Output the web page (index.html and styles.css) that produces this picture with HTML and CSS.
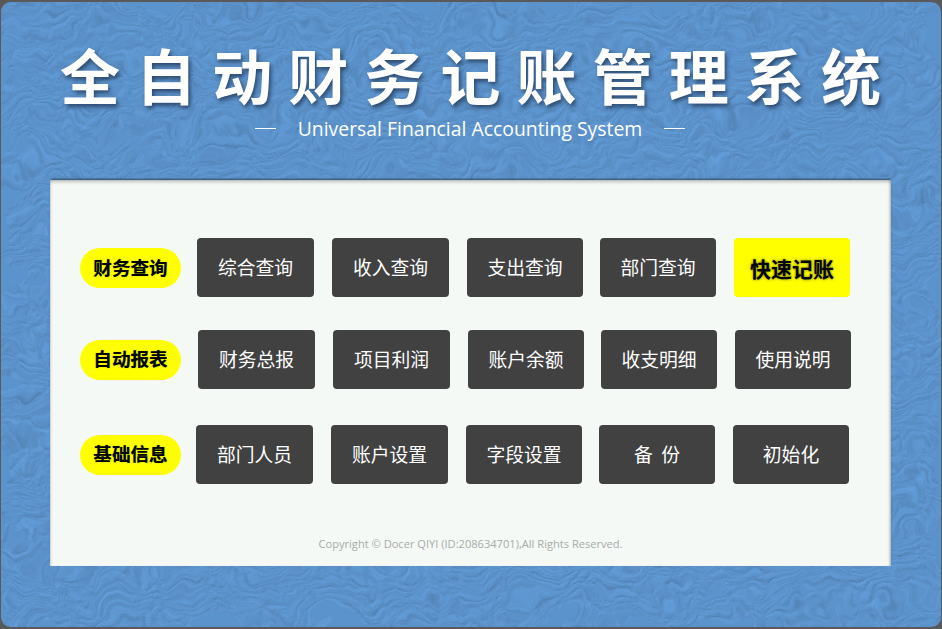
FILE: index.html
```html
<!DOCTYPE html>
<html lang="zh-CN">
<head>
<meta charset="utf-8">
<title>全自动财务记账管理系统</title>
<link rel="stylesheet" href="styles.css">
</head>
<body>
<div class="frame">
  <svg class="texture" width="100%" height="100%" aria-hidden="true">
    <filter id="swirl" x="0" y="0" width="100%" height="100%" color-interpolation-filters="sRGB">
      <feTurbulence type="turbulence" baseFrequency="0.05 0.09" numOctaves="3" seed="11" result="noise"/>
      <feDiffuseLighting in="noise" surfaceScale="0.48" diffuseConstant="1" lighting-color="#6aa9ea" result="lit">
        <feDistantLight azimuth="235" elevation="60"/>
      </feDiffuseLighting>
      <feTurbulence type="fractalNoise" baseFrequency="0.016" numOctaves="3" seed="4" result="warp"/>
      <feDisplacementMap in="lit" in2="warp" scale="70" xChannelSelector="R" yChannelSelector="G"/>
    </filter>
    <rect width="100%" height="100%" fill="#5b93cd" filter="url(#swirl)"/>
  </svg>
  <header class="head">
    <h1 class="title">全自动财务记账管理系统</h1>
    <p class="subtitle"><span class="dash"></span><span>Universal Financial Accounting System</span><span class="dash"></span></p>
  </header>
  <main class="panel">
    <div class="row row-a">
      <div class="pill">财务查询</div>
      <div class="btns">
        <a class="btn">综合查询</a><a class="btn">收入查询</a><a class="btn">支出查询</a><a class="btn">部门查询</a><a class="btn btn-hot">快速记账</a>
      </div>
    </div>
    <div class="row row-b">
      <div class="pill">自动报表</div>
      <div class="btns">
        <a class="btn">财务总报</a><a class="btn">项目利润</a><a class="btn">账户余额</a><a class="btn">收支明细</a><a class="btn">使用说明</a>
      </div>
    </div>
    <div class="row row-c">
      <div class="pill">基础信息</div>
      <div class="btns">
        <a class="btn">部门人员</a><a class="btn">账户设置</a><a class="btn">字段设置</a><a class="btn">备  份</a><a class="btn">初始化</a>
      </div>
    </div>
    <footer class="copy">Copyright © Docer QIYI (ID:208634701),All Rights Reserved.</footer>
  </main>
</div>
</body>
</html>
```

FILE: styles.css
```css
* { box-sizing: border-box; }
html, body { margin: 0; height: 100%; background: #595959; overflow: hidden; }
body { padding: 2px 1px 2px 1px; font-family: "Noto Sans CJK SC", "Noto Sans", sans-serif; }
.frame {
  position: relative;
  height: 625px;
  border-radius: 10px;
  overflow: hidden;
  background: #5b93cd;
  padding-top: 36px;
  display: flex;
  flex-direction: column;
  align-items: center;
}
.texture { position: absolute; inset: 0; }
.head, .panel { position: relative; }
.head { height: 142px; text-align: center; width: 100%; }
.title {
  margin: 0;
  font-size: 60px;
  line-height: 72px;
  font-weight: 700;
  letter-spacing: 16.1px;
  padding-left: 15px;
  color: #fff;
  text-shadow: 2px 3px 4px rgba(30, 50, 80, .75);
  white-space: nowrap;
}
.subtitle {
  margin: 0;
  display: flex;
  justify-content: center;
  align-items: center;
  gap: 22px;
  height: 28px;
  margin-top: 4px;
  padding-right: 2px;
  color: #fff;
  font-family: "Open Sans", sans-serif;
  font-size: 19.4px;
  font-weight: 400;
}
.dash { width: 21px; height: 1px; background: #fff; }
.panel {
  width: 841px;
  height: 386px;
  margin-left: -1px;
  background: #f4f9f6;
  box-shadow: 0 -2px 2px -1px rgba(0,0,0,.5), inset 0 3px 4px -2px rgba(0,0,0,.35), inset -3px 0 3px -2px rgba(0,0,0,.3), inset 2px 0 2px -1px rgba(0,0,0,.12);
  display: flex;
  flex-direction: column;
  padding-left: 30px;
}
.row { display: flex; align-items: center; height: 59px; }
.row-a { margin-top: 58px; gap: 16px; }
.row-b { margin-top: 33px; gap: 17px; }
.row-c { margin-top: 36px; gap: 15px; }
.pill {
  width: 101px;
  height: 40px;
  border-radius: 20px;
  background: #ffff00;
  color: #000;
  font-size: 18.6px;
  font-weight: 700;
  line-height: 37px;
  text-align: center;
  text-shadow: 0 0 1px rgba(0,60,0,.5);
}
.row-b .pill, .row-c .pill { line-height: 35px; }
.btns { display: flex; gap: 18px; }
.btn {
  width: 116px;
  height: 59px;
  border-radius: 4px;
  background: #414141;
  color: #fff;
  font-size: 18.8px;
  font-weight: 400;
  line-height: 58px;
  text-align: center;
  white-space: pre;
}
.btn:nth-child(-n+2) { width: 117px; }
.btn:nth-child(4) { margin-left: -1px; }
.btn-hot {
  background: #ffff00;
  color: #000;
  font-size: 21px;
  font-weight: 700;
  line-height: 60px;
  text-shadow: 0 0 3px rgba(0,0,0,.55);
}
.copy {
  margin-top: 52px;
  text-align: center;
  font-family: "Open Sans", sans-serif;
  font-size: 11.1px;
  line-height: 16px;
  color: #a9a9a9;
  margin-right: 30px;
}
```
